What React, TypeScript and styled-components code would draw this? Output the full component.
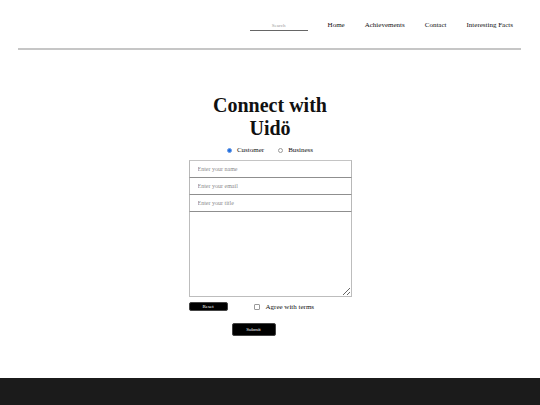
import React from 'react';
import styled, { createGlobalStyle } from 'styled-components';

const GlobalStyle = createGlobalStyle`
	html,
	body {
		margin: 0;
		padding: 0;
		background: #ffffff;
	}
	body {
		font-family: 'Liberation Serif', 'Times New Roman', serif;
		color: #111111;
	}
	* {
		box-sizing: border-box;
	}
`;

const Page = styled.div`
	display: flex;
	flex-direction: column;
	min-height: 100vh;
`;

const Header = styled.header`
	display: flex;
	justify-content: flex-end;
	align-items: center;
	gap: 20px;
	height: 32px;
	padding: 19px 27px 0 0;
`;

const SearchInput = styled.input`
	width: 58px;
	height: 10px;
	padding: 0;
	border: none;
	border-bottom: 1px solid #666666;
	background: transparent;
	font-family: inherit;
	font-size: 5px;
	text-align: center;
	outline: none;

	&::placeholder {
		color: #9a9a9a;
	}
`;

const NavLink = styled.a`
	font-size: 7px;
	line-height: 13px;
	color: #111111;
	text-decoration: none;
	white-space: nowrap;
`;

const Divider = styled.hr`
	height: 2px;
	margin: 16px 19px 0 18px;
	border: none;
	background: #c6c6c6;
`;

const Main = styled.main`
	flex: 1;
	display: flex;
	flex-direction: column;
	align-items: center;
`;

const Heading = styled.h1`
	width: 130px;
	margin: 44px 0 0;
	font-size: 20px;
	line-height: 23px;
	font-weight: 700;
	text-align: center;
`;

const RadioRow = styled.div`
	display: flex;
	align-items: center;
	height: 8px;
	margin-top: 6px;
	font-size: 7px;
`;

const RadioLabel = styled.label<{ $spaced?: boolean }>`
	display: flex;
	align-items: center;
	gap: 5px;
	margin-left: ${({ $spaced }) => ($spaced ? '14px' : '0')};
	line-height: 8px;
`;

const Radio = styled.input.attrs({ type: 'radio' })`
	appearance: none;
	width: 5px;
	height: 5px;
	margin: 0;
	border: 1px solid #9a9a9a;
	border-radius: 50%;
	background: #ffffff;

	&:checked {
		border-color: #6b9be6;
		background: #1f6fe0;
	}
`;

const Form = styled.form`
	display: flex;
	flex-direction: column;
	width: 163px;
	margin-top: 6px;
`;

const Field = styled.input`
	height: 18px;
	padding: 0 0 0 8px;
	border: 1px solid #b8b8b8;
	border-top-color: #8f8f8f;
	border-bottom-color: #8f8f8f;
	font-family: inherit;
	font-size: 6px;
	outline: none;

	& + & {
		margin-top: -1px;
	}

	&:first-child {
		border-top-color: #c4c4c4;
	}

	&::placeholder {
		color: #8a8a8a;
	}
`;

const Message = styled.textarea`
	height: 86px;
	margin-top: -1px;
	padding: 4px 8px;
	border: 1px solid #bdbdbd;
	border-top-color: #8f8f8f;
	font-family: inherit;
	font-size: 6px;
	outline: none;
`;

const ActionRow = styled.div`
	display: flex;
	align-items: center;
	margin-top: 5px;
	height: 9px;
`;

const DarkButton = styled.button<{ $width: number; $height: number }>`
	display: block;
	width: ${({ $width }) => $width}px;
	height: ${({ $height }) => $height}px;
	padding: 0;
	border: 1px solid #444444;
	border-radius: 2px;
	background: #000000;
	color: #ffffff;
	font-family: inherit;
	font-size: 5px;
	line-height: 1;
	cursor: pointer;
`;

const TermsLabel = styled.label`
	display: flex;
	align-items: center;
	gap: 6px;
	margin-left: 26px;
	font-size: 7px;
	line-height: 8px;
`;

const Checkbox = styled.input.attrs({ type: 'checkbox' })`
	appearance: none;
	width: 6px;
	height: 6px;
	margin: 0;
	border: 1px solid #9a9a9a;
	border-radius: 1px;
	background: #ffffff;
`;

const SubmitWrap = styled.div`
	display: flex;
	margin: 12px 0 0 43px;
`;

const Footer = styled.footer`
	height: 27px;
	background: #1b1b1b;
`;

const links = ['Home', 'Achievements', 'Contact', 'Interesting Facts'];

export default function App() {
	return (
		<>
			<GlobalStyle />
			<Page>
				<Header>
					<SearchInput placeholder="Search" />
					{links.map((link) => (
						<NavLink key={link} href="#">
							{link}
						</NavLink>
					))}
				</Header>
				<Divider />
				<Main>
					<Heading>Connect with Uidö</Heading>
					<RadioRow>
						<RadioLabel>
							<Radio name="kind" defaultChecked />
							Customer
						</RadioLabel>
						<RadioLabel $spaced>
							<Radio name="kind" />
							Business
						</RadioLabel>
					</RadioRow>
					<Form onSubmit={(e) => e.preventDefault()}>
						<Field placeholder="Enter your name" />
						<Field placeholder="Enter your email" />
						<Field placeholder="Enter your title" />
						<Message />
						<ActionRow>
							<DarkButton type="reset" $width={39} $height={9}>
								Reset
							</DarkButton>
							<TermsLabel>
								<Checkbox />
								Agree with terms
							</TermsLabel>
						</ActionRow>
						<SubmitWrap>
							<DarkButton type="submit" $width={44} $height={13}>
								Submit
							</DarkButton>
						</SubmitWrap>
					</Form>
				</Main>
				<Footer />
			</Page>
		</>
	);
}
